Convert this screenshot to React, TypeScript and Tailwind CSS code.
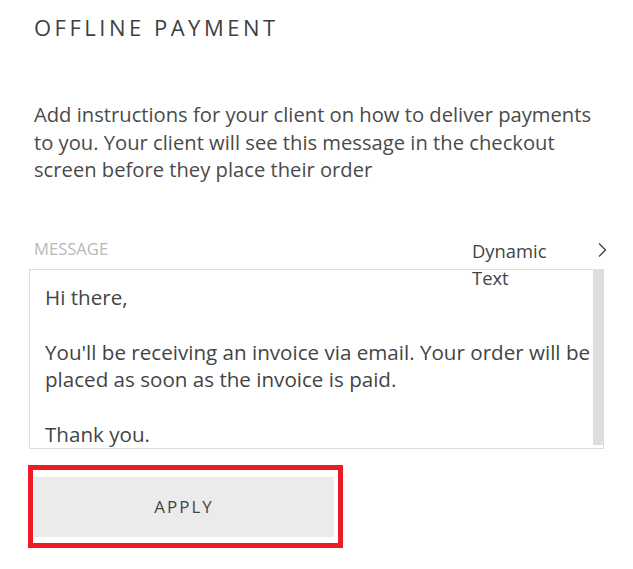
import React from "react";

export default function App() {
  return (
    <div className="w-[633px] h-[569px] bg-white relative" style={{ fontFamily: '"Open Sans", sans-serif' }}>
      <div className="pl-[34px] pt-[12px]">
        <h1 className="text-[22px] leading-[30px] tracking-[3.5px] text-[#3f3f3f] font-normal">OFFLINE PAYMENT</h1>
        <p className="mt-[59px] text-[20.2px] leading-[27.5px] text-[#4a4a4a] w-[580px]">
          Add instructions for your client on how to deliver payments to you. Your client will see this message in the checkout screen before they place their order
        </p>
      </div>
      <div className="pl-[29px] mt-[45px] w-[604px]">
        <div className="relative flex items-end justify-between pl-[5px] h-[30px]">
          <span className="text-[16.6px] leading-[20px] text-[#b8b8b8]">MESSAGE</span>
          <div className="absolute left-[443px] top-[8px] w-[95px] text-[18.4px] leading-[27px] text-[#444]">Dynamic Text</div>
          <svg className="absolute left-[568px] top-[13px]" width="10" height="16" viewBox="0 0 10 16" fill="none">
            <path d="M2 1.5 L8.5 8 L2 14.5" stroke="#444" strokeWidth="1.4" />
          </svg>
        </div>
        <div className="mt-[10px] h-[180px] border border-[#dedede] flex">
          <div className="flex-1 pl-[15px] pt-[14px] text-[20.6px] leading-[27.5px] text-[#444] overflow-hidden">
            <p>Hi there,</p>
            <p className="h-[27.5px]"></p>
            <p>You'll be receiving an invoice via email. Your order will be placed as soon as the invoice is paid.</p>
            <p className="h-[27.5px]"></p>
            <p>Thank you.</p>
          </div>
          <div className="w-[10px] bg-[#dedede] mb-[3px]"></div>
        </div>
      </div>
      <div className="ml-[28px] mt-[16px] w-[315px] h-[83px] border-[5px] border-[#ed1c24] pl-[1px] pt-[7px]">
        <button className="w-[300px] h-[60px] bg-[#ebebeb] text-[17px] tracking-[2px] text-[#444]">APPLY</button>
      </div>
    </div>
  );
}
